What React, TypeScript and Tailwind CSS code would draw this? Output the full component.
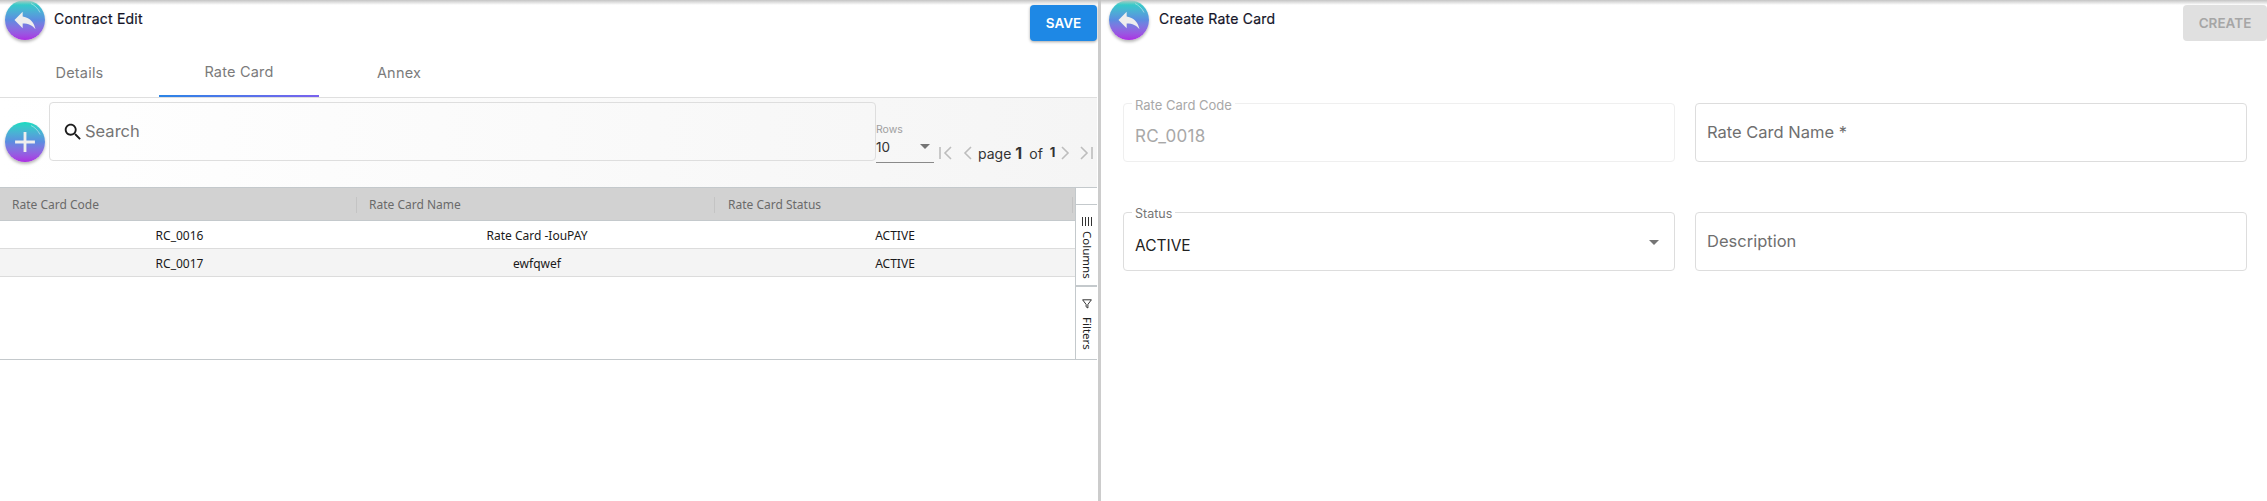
import React from "react";

const UI = "font-['Inter','Noto_Sans',sans-serif]";
const GRID = "font-['Noto_Sans','Open_Sans',sans-serif]";

function Circle({ d, size, extra }: { d: string; size: number; extra: string }) {
  return (
    <div className={`relative flex h-10 w-10 shrink-0 items-center justify-center rounded-full bg-gradient-to-b from-[#11dcc0] via-[#5b8ce0] to-[#ab2ce2] shadow-[0_2px_3px_rgba(0,0,0,0.28)] ${extra}`}>
      <svg width={size} height={size} viewBox="0 0 24 24" fill="#eeeeee">
        <path d={d} />
      </svg>
      <svg className="absolute left-0 top-0" width="40" height="40" viewBox="0 0 40 40" fill="none">
        <path d="M26 3.5C30 5.5 33 8.5 35 12.5" stroke="#ffffff" strokeOpacity="0.55" strokeWidth="0.8" />
      </svg>
    </div>
  );
}

const REPLY = "M10 9V5l-7 7 7 7v-4.1c5 0 8.5 1.6 11 5.1-1-5-4-10-11-11z";
const ADD = "M19 13h-6v6h-2v-6H5v-2h6V5h2v6h6v2z";

function Caret({ extra }: { extra: string }) {
  return (
    <svg className={extra} width="10" height="5" viewBox="0 0 10 5" fill="#757575">
      <path d="M0 0h10L5 5z" />
    </svg>
  );
}

function PageIcon({ d, width }: { d: string; width: number }) {
  return (
    <svg width={width} height="14" viewBox={`0 0 ${width} 14`} fill="none" stroke="#bdbdbd" strokeWidth="1.6">
      <path d={d} />
    </svg>
  );
}

function Field({
  label,
  value,
  disabled,
  caret,
  placeholder,
  large,
}: {
  label?: string;
  value?: string;
  disabled?: boolean;
  caret?: boolean;
  placeholder?: string;
  large?: boolean;
}) {
  return (
    <div className={`relative flex h-[59px] flex-1 items-center rounded border pl-[11px] ${disabled ? "border-[#efefef]" : "border-[#dddddd]"}`}>
      {label && (
        <span className={`absolute left-[8px] top-[-7px] bg-white px-[3px] leading-[16px] ${disabled ? "text-[13px] text-[#a8a8a8]" : "text-[12.5px] text-[#757575]"}`}>
          {label}
        </span>
      )}
      {value && (
        <span className={`mt-[9px] ${large ? "text-[17px] tracking-[0.3px]" : "text-[15.5px]"} ${disabled ? "text-[#a8a8a8]" : "text-[#222222]"}`}>{value}</span>
      )}
      {placeholder && <span className="text-[16.5px] text-[#6f6f6f]">{placeholder}</span>}
      {caret && <Caret extra="absolute right-[15px] top-[27px]" />}
    </div>
  );
}

function Row({ code, name, striped }: { code: string; name: string; striped?: boolean }) {
  return (
    <div className={`grid h-[28px] grid-cols-[357px_358px_358px] items-center border-b border-[#dcdcdc] pl-px pt-[2px] text-center text-[12px] text-[#1a1a1a] ${striped ? "bg-[#f4f4f4]" : "bg-white"}`}>
      <span>{code}</span>
      <span>{name}</span>
      <span>ACTIVE</span>
    </div>
  );
}

function HeaderCell({ label, last }: { label: string; last?: boolean }) {
  return (
    <div className={`flex h-[16px] items-center ${last ? "pl-[13px]" : "pl-[12px]"} border-r border-[#c4c4c4]`}>{label}</div>
  );
}

export default function App() {
  return (
    <div className={`relative flex h-[501px] w-[2267px] overflow-hidden bg-white ${UI}`}>
      <div className="absolute left-0 top-0 z-10 h-[5px] w-full bg-gradient-to-b from-[#c4c4c4] to-transparent" />

      <div className="flex h-full w-[1098px] shrink-0 flex-col pr-px">
        <div className="flex h-[47px] items-start">
          <Circle d={REPLY} size={28} extra="ml-[5px]" />
          <span className="ml-[9px] mt-[10px] text-[14px] leading-[18px] tracking-[0.2px] text-[#141428] [-webkit-text-stroke:0.2px_#141428]">Contract Edit</span>
          <button className="ml-auto mt-[5px] h-[36px] w-[67px] rounded bg-[#1e88e5] text-[13.5px] font-semibold text-white shadow-[0_1px_3px_rgba(0,0,0,0.35)]">
            SAVE
          </button>
        </div>

        <div className="flex h-[51px] border-b border-[#dfdfdf] pt-px text-[14.5px] tracking-[0.2px] text-[#7b7b7b]">
          <div className="flex h-[49px] w-[159px] items-center justify-center">Details</div>
          <div className="flex h-[49px] w-[160px] items-center justify-center border-b-2 border-transparent [border-image:linear-gradient(to_right,#2a85e6,#7a62ee)_1]">Rate Card</div>
          <div className="flex h-[49px] w-[160px] items-center justify-center">Annex</div>
        </div>

        <div className="flex h-[89px] bg-gradient-to-r from-white to-[#f5f5f5]">
          <Circle d={ADD} size={34} extra="ml-[5px] mt-[24px]" />
          <div className="ml-[4px] mt-[4px] flex h-[59px] w-[827px] items-center rounded border border-[#dedede] pl-[12px]">
            <svg width="22" height="22" viewBox="0 0 24 24" fill="#1c1c1c">
              <path d="M15.5 14h-.79l-.28-.27C15.41 12.59 16 11.11 16 9.5 16 5.91 13.09 3 9.5 3S3 5.91 3 9.5 5.91 16 9.5 16c1.61 0 3.09-.59 4.23-1.57l.27.28v.79l5 4.99L20.49 19l-4.99-5zm-6 0C7.01 14 5 11.99 5 9.5S7.01 5 9.5 5 14 7.01 14 9.5 11.99 14 9.5 14z" />
            </svg>
            <span className="ml-[1px] text-[16.5px] text-[#757575]">Search</span>
          </div>

          <div className="mt-[25px] flex h-[40px] w-[58px] flex-col border-b border-[#8a8a8a]">
            <span className="text-[10.5px] leading-[13px] text-[#a0a0a0]">Rows</span>
            <div className="relative mt-[2px] flex items-center text-[13.5px] leading-[18px] text-[#333333]">
              10
              <Caret extra="absolute right-[4px] top-[6px]" />
            </div>
          </div>

          <div className="ml-[5px] mt-[46px] flex h-[18px] items-center">
            <PageIcon width={14} d="M1 1v12M12 1L6 7l6 6" />
            <span className="ml-[10px] flex"><PageIcon width={9} d="M8 1L2 7l6 6" /></span>
            <span className="ml-[6px] text-[14px] text-[#333333]">page</span>
            <span className="ml-[4px] text-[16px] font-bold text-[#333333]">1</span>
            <span className="ml-[7px] text-[14px] text-[#333333]">of</span>
            <span className="ml-[7px] text-[13px] font-bold text-[#333333]">1</span>
            <span className="ml-[6px] flex"><PageIcon width={9} d="M1 1l6 6-6 6" /></span>
            <span className="ml-[9px] flex"><PageIcon width={14} d="M2 1l6 6-6 6M13 1v12" /></span>
          </div>
        </div>

        <div className={`flex h-[173px] border-y border-[#c4c9cc] ${GRID}`}>
          <div className="w-[1075px]">
            <div className="flex h-[33px] items-center border-b border-[#c4c9cc] bg-[#d2d2d2] pt-[2px] text-[12px] text-[#6a6a6a]">
              <div className="grid w-[1073px] grid-cols-[357px_358px_358px]">
                <HeaderCell label="Rate Card Code" />
                <HeaderCell label="Rate Card Name" />
                <HeaderCell label="Rate Card Status" last />
              </div>
            </div>
            <Row code="RC_0016" name="Rate Card -IouPAY" />
            <Row code="RC_0017" name="ewfqwef" striped />
          </div>

          <div className="flex w-[22px] flex-col border-l border-[#c4c9cc] bg-white text-[11.5px] text-[#222222]">
            <div className="h-[17px] border-b border-[#c4c9cc]" />
            <div className="flex h-[82px] flex-col items-center border-b-2 border-[#c4c9cc] pt-[12px]">
              <svg width="10" height="9" viewBox="0 0 10 9" fill="#333333">
                <path d="M0 0h1v9H0zM3 0h1v9H3zM6 0h1v9H6zM9 0h1v9H9z" />
              </svg>
              <span className="mt-[5px] leading-[14px] [writing-mode:vertical-rl]">Columns</span>
            </div>
            <div className="flex flex-1 flex-col items-center pt-[12px]">
              <svg width="10" height="10" viewBox="0 0 10 10" fill="none" stroke="#333333" strokeWidth="1">
                <path d="M0.6 0.8H9.4L5.9 5.4V9L4.1 7.8V5.4Z" />
              </svg>
              <span className="mt-[8px] leading-[14px] [writing-mode:vertical-rl]">Filters</span>
            </div>
          </div>
        </div>
      </div>

      <div className="h-full w-[3px] shrink-0 bg-[#cccccc]" />

      <div className="flex h-full flex-1 flex-col">
        <div className="flex h-[47px] items-start">
          <Circle d={REPLY} size={28} extra="ml-[8px]" />
          <span className="ml-[10px] mt-[10px] text-[14px] leading-[18px] tracking-[0.2px] text-[#141428] [-webkit-text-stroke:0.2px_#141428]">Create Rate Card</span>
          <button className="ml-auto mt-[5px] h-[36px] w-[84px] rounded bg-[#e0e0e0] text-[13.5px] font-semibold text-[#a6a6a6]">
            CREATE
          </button>
        </div>
        <div className="ml-[22px] mr-[20px] mt-[56px] grid grid-cols-2 gap-x-[20px] gap-y-[50px]">
          <Field label="Rate Card Code" value="RC_0018" disabled large />
          <Field placeholder="Rate Card Name *" />
          <Field label="Status" value="ACTIVE" caret />
          <Field placeholder="Description" />
        </div>
      </div>
    </div>
  );
}
